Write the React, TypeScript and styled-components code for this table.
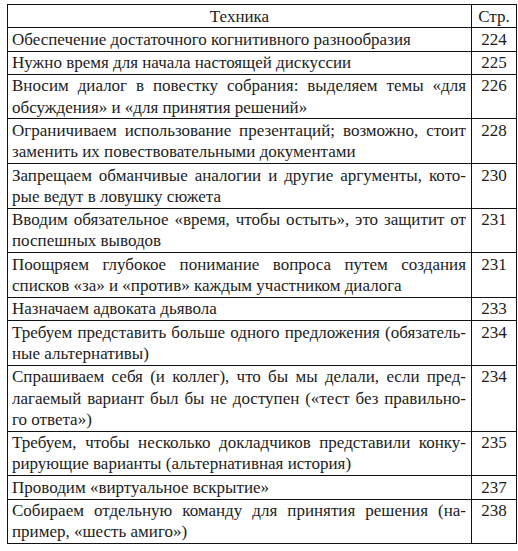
import { Fragment } from "react";
import styled, { ThemeProvider, createGlobalStyle } from "styled-components";

type Row = { lines: string[]; page: string };

const theme = {
  font: `"Liberation Serif", "Times New Roman", serif`,
  ink: "#1c1c1c",
  rule: "#111111",
};

const rows: Row[] = [
  { lines: ["Обеспечение достаточного когнитивного разнообразия"], page: "224" },
  { lines: ["Нужно время для начала настоящей дискуссии"], page: "225" },
  {
    lines: [
      "Вносим диалог в повестку собрания: выделяем темы «для",
      "обсуждения» и «для принятия решений»",
    ],
    page: "226",
  },
  {
    lines: [
      "Ограничиваем использование презентаций; возможно, стоит",
      "заменить их повествовательными документами",
    ],
    page: "228",
  },
  {
    lines: [
      "Запрещаем обманчивые аналогии и другие аргументы, кото-",
      "рые ведут в ловушку сюжета",
    ],
    page: "230",
  },
  {
    lines: [
      "Вводим обязательное «время, чтобы остыть», это защитит от",
      "поспешных выводов",
    ],
    page: "231",
  },
  {
    lines: [
      "Поощряем глубокое понимание вопроса путем создания",
      "списков «за» и «против» каждым участником диалога",
    ],
    page: "231",
  },
  { lines: ["Назначаем адвоката дьявола"], page: "233" },
  {
    lines: [
      "Требуем представить больше одного предложения (обязатель-",
      "ные альтернативы)",
    ],
    page: "234",
  },
  {
    lines: [
      "Спрашиваем себя (и коллег), что бы мы делали, если пред-",
      "лагаемый вариант был бы не доступен («тест без правильно-",
      "го ответа»)",
    ],
    page: "234",
  },
  {
    lines: [
      "Требуем, чтобы несколько докладчиков представили конку-",
      "рирующие варианты (альтернативная история)",
    ],
    page: "235",
  },
  { lines: ["Проводим «виртуальное вскрытие»"], page: "237" },
  {
    lines: [
      "Собираем отдельную команду для принятия решения (на-",
      "пример, «шесть амиго»)",
    ],
    page: "238",
  },
];

const GlobalStyle = createGlobalStyle`
  body {
    margin: 0;
    background: #ffffff;
  }
`;

const Page = styled.main`
  padding: 4px 0 0 7px;
`;

const Table = styled.div`
  width: 509px;
  display: grid;
  grid-template-columns: 464px 45px;
  border-top: 1px solid ${({ theme }) => theme.rule};
  border-left: 1px solid ${({ theme }) => theme.rule};
`;

const Cell = styled.div<{ $center?: boolean }>`
  font-family: ${({ theme }) => theme.font};
  font-size: 17px;
  line-height: 21.3px;
  color: ${({ theme }) => theme.ink};
  border-right: 1px solid ${({ theme }) => theme.rule};
  border-bottom: 1px solid ${({ theme }) => theme.rule};
  padding: ${({ $center }) => ($center ? "0.5px 0" : "0.5px 5px 0.5px 4px")};
  text-align: ${({ $center }) => ($center ? "center" : "left")};
`;

const Line = styled.div<{ $fill: boolean }>`
  white-space: ${({ $fill }) => ($fill ? "normal" : "nowrap")};
  text-align: ${({ $fill }) => ($fill ? "justify" : "left")};
  text-align-last: ${({ $fill }) => ($fill ? "justify" : "left")};
`;

export default function App() {
  return (
    <ThemeProvider theme={theme}>
      <GlobalStyle />
      <Page>
        <Table>
          <Cell $center>Техника</Cell>
          <Cell $center>Стр.</Cell>
          {rows.map((row, i) => (
            <Fragment key={i}>
              <Cell>
                {row.lines.map((line, j) => (
                  <Line key={j} $fill={j < row.lines.length - 1}>
                    {line}
                  </Line>
                ))}
              </Cell>
              <Cell $center>{row.page}</Cell>
            </Fragment>
          ))}
        </Table>
      </Page>
    </ThemeProvider>
  );
}
